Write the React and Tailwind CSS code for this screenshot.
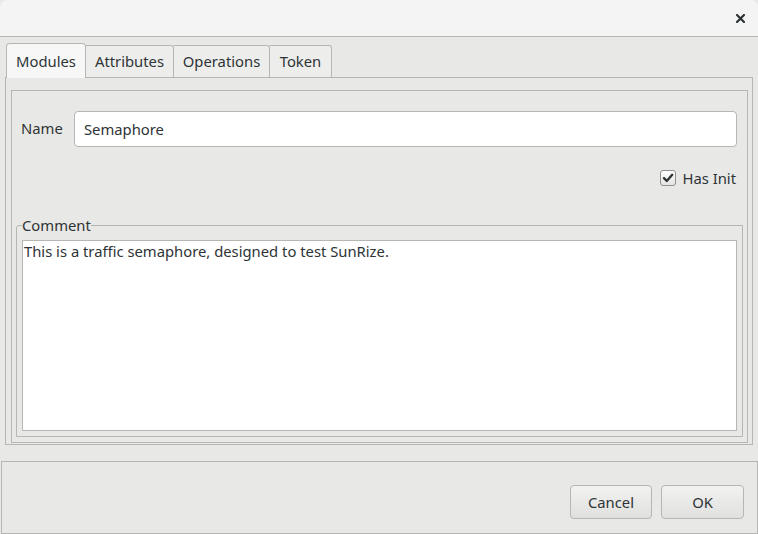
import React from "react";

const font = { fontFamily: '"Noto Sans", "Open Sans", sans-serif' };

function Tab({ label, active, width }) {
  return active ? (
    <div
      className="h-[35px] mt-0 flex items-center justify-center border border-b-0 border-[#b6b6b3] rounded-t-[4px] bg-[#f7f7f7] text-[#2e3436] text-[14.8px] -mb-px relative z-10"
      style={{ width }}
    >
      {label}
    </div>
  ) : (
    <div
      className="h-[32px] mt-[2px] flex items-center justify-center border border-l-0 border-b-0 border-[#b6b6b3] rounded-tr-[3px] bg-[#ededec] text-[#2e3436] text-[14.8px]"
      style={{ width }}
    >
      {label}
    </div>
  );
}

export default function App() {
  return (
    <div className="w-[758px] h-[534px] bg-[#e8e8e7] flex flex-col overflow-hidden text-[#2e3436]" style={font}>
      {/* Title bar */}
      <div className="h-[37px] shrink-0 bg-[#f4f4f4] border-b border-[#b6b6b3] rounded-t-[7px] flex items-center justify-end pr-[13px]">
        <svg width="9" height="9" viewBox="0 0 9 9" className="mt-[1px]">
          <path d="M1 1 L8 8 M8 1 L1 8" stroke="#2e3436" strokeWidth="2.2" strokeLinecap="square" />
        </svg>
      </div>

      {/* Tabs */}
      <div className="flex pl-[6px] pt-[6px] shrink-0">
        <Tab label="Modules" active width={80} />
        <Tab label="Attributes" width={88} />
        <Tab label="Operations" width={96} />
        <Tab label="Token" width={62} />
      </div>

      {/* Notebook panel */}
      <div className="ml-[5px] w-[748px] h-[368px] border border-[#b6b6b3] bg-[#e8e8e7] pl-[5px] pr-[4px] pt-[12px] pb-[1px] flex">
        <div className="flex-1 border border-[#b6b6b3] flex flex-col">
          {/* Name row */}
          <div className="flex items-start pt-[20px] pl-[9px] pr-[10px]">
            <div className="text-[14.8px] mt-[6px] w-[53px]">Name</div>
            <div className="flex-1 h-[36px] bg-white border border-[#b6b6b3] rounded-[4px] flex items-center pl-[9px] text-[14.8px]">
              Semaphore
            </div>
          </div>
          {/* Has Init */}
          <div className="flex justify-end items-center pr-[11px] mt-[20px]">
            <div className="w-[16px] h-[16px] rounded-[3px] border border-[#8f9090] bg-gradient-to-b from-[#ffffff] to-[#e4e4e3] flex items-center justify-center mr-[6px]">
              <svg width="12" height="12" viewBox="0 0 12 12">
                <path d="M2 6.2 L4.8 9 L10.2 2.8" stroke="#2e3436" strokeWidth="2.4" fill="none" strokeLinecap="round" strokeLinejoin="round" />
              </svg>
            </div>
            <span className="text-[14.8px]">Has Init</span>
          </div>
          {/* Comment frame */}
          <fieldset className="mx-[4px] mt-[27px] mb-[5px] flex-1 border border-[#b6b6b3] rounded-tl-[3px] px-[5px] pb-[5px] pt-[6px] flex flex-col min-h-0">
            <legend className="text-[14.8px] leading-[18px] px-0 ml-0">Comment</legend>
            <div className="flex-1 bg-white border border-[#b6b6b3] text-[14.8px] pl-[1px] pt-0 leading-[20px]">
              This is a traffic semaphore, designed to test SunRize.
            </div>
          </fieldset>
        </div>
      </div>

      {/* Action area */}
      <div className="mt-[16px] ml-[1px] w-[757px] flex-1 border border-[#b6b6b3] flex justify-end items-start pt-[23px] pr-[13px] gap-[9px]">
        <button className="w-[82px] h-[34px] border border-[#b6b6b3] rounded-[4px] bg-gradient-to-b from-[#f2f2f1] to-[#e0e0de] text-[14.8px] text-[#2e3436]" style={font}>
          Cancel
        </button>
        <button className="w-[83px] h-[34px] border border-[#b6b6b3] rounded-[4px] bg-gradient-to-b from-[#f2f2f1] to-[#e0e0de] text-[14.8px] text-[#2e3436]" style={font}>
          OK
        </button>
      </div>
    </div>
  );
}
